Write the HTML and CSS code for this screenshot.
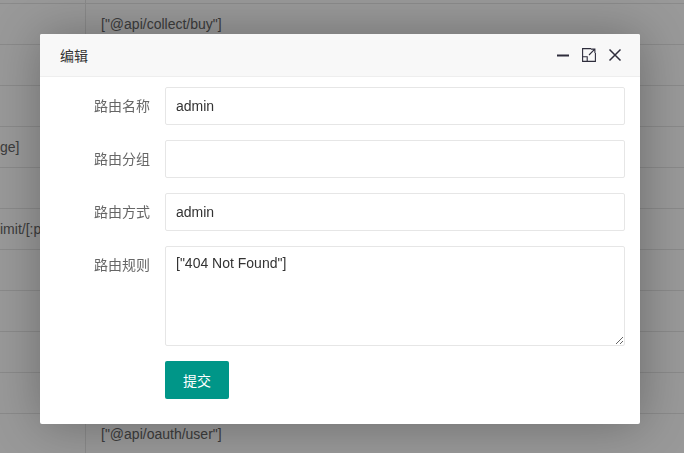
FILE: index.html
```html
<!DOCTYPE html>
<html lang="zh-CN">
<head>
  <meta charset="UTF-8">
  <meta name="viewport" content="width=device-width, initial-scale=1.0">
  <title>路由管理</title>
  <link rel="stylesheet" href="styles.css">
</head>
<body>
  <table class="list">
    <tr><td class="c1"></td><td></td></tr>
    <tr><td class="c1"></td><td>["@api/collect/buy"]</td></tr>
    <tr><td class="c1"></td><td></td></tr>
    <tr><td class="c1"></td><td></td></tr>
    <tr><td class="c1"><div class="clip">ge]</div></td><td></td></tr>
    <tr><td class="c1"></td><td></td></tr>
    <tr><td class="c1"><div class="clip">imit/[:page]</div></td><td></td></tr>
    <tr><td class="c1"></td><td></td></tr>
    <tr><td class="c1"></td><td></td></tr>
    <tr><td class="c1"></td><td></td></tr>
    <tr><td class="c1"></td><td></td></tr>
    <tr><td class="c1"></td><td>["@api/oauth/user"]</td></tr>
  </table>

  <div class="shade"></div>

  <div class="layer">
    <div class="layer-title">
      <span>编辑</span>
      <div class="layer-btns">
        <svg width="14" height="14" viewBox="0 0 14 14"><path d="M1 7.5h12" stroke="#2e2d3c" stroke-width="2"/></svg>
        <svg width="14" height="14" viewBox="0 0 14 14" fill="none" stroke="#2e2d3c" stroke-width="1.1">
          <path d="M9 0.6H0.6V13.4H13.4V5"/>
          <path d="M0.6 8.8H5.2V13.4"/>
          <path d="M7 7L12.8 1.2M9 1.1H12.9V5"/>
        </svg>
        <svg width="14" height="14" viewBox="0 0 14 14"><path d="M1.5 1.5L12.5 12.5M12.5 1.5L1.5 12.5" stroke="#2e2d3c" stroke-width="1.5"/></svg>
      </div>
    </div>
    <form class="layer-content">
      <div class="form-item">
        <label class="form-label">路由名称</label>
        <div class="input-block"><input class="input" type="text" value="admin"></div>
      </div>
      <div class="form-item">
        <label class="form-label">路由分组</label>
        <div class="input-block"><input class="input" type="text" value=""></div>
      </div>
      <div class="form-item">
        <label class="form-label">路由方式</label>
        <div class="input-block"><input class="input" type="text" value="admin"></div>
      </div>
      <div class="form-item">
        <label class="form-label">路由规则</label>
        <div class="input-block"><textarea class="textarea">["404 Not Found"]</textarea></div>
      </div>
      <div class="form-item">
        <div class="input-block"><button type="button" class="btn">提交</button></div>
      </div>
    </form>
  </div>
</body>
</html>
```

FILE: styles.css
```css
body {
  margin: 0;
  font-family: "Liberation Sans", Arial, "Noto Sans CJK SC", sans-serif;
  font-size: 14px;
  color: #666;
  background: #fff;
  overflow: hidden;
}
.list {
  border-collapse: collapse;
  width: 100%;
  margin-top: -37px;
}
.list td {
  height: 40px;
  padding: 0 15px;
  border-bottom: 1px solid #e6e6e6;
  white-space: nowrap;
}
.list td.c1 {
  width: 85px;
  padding: 0;
  border-right: 1px solid #e6e6e6;
}
.clip {
  width: 84px;
  overflow: hidden;
}
.shade {
  position: fixed;
  left: 0;
  top: 0;
  right: 0;
  bottom: 0;
  background: rgba(0, 0, 0, 0.4);
}
.layer {
  position: absolute;
  left: 40px;
  top: 34px;
  width: 600px;
  background: #fff;
  border-radius: 2px;
  box-shadow: 1px 1px 50px rgba(0, 0, 0, 0.3);
}
.layer-title {
  height: 42px;
  padding: 0 18px 0 20px;
  border-bottom: 1px solid #eee;
  background: #f8f8f8;
  border-radius: 2px 2px 0 0;
  color: #333;
  display: flex;
  align-items: center;
  justify-content: space-between;
}
.layer-btns {
  display: flex;
  gap: 12px;
  align-items: center;
}
.layer-btns svg {
  display: block;
}
.layer-content {
  padding: 10px 15px 10px 15px;
}
.form-item {
  display: flex;
  margin-bottom: 15px;
}
.form-label {
  width: 80px;
  padding: 9px 15px;
  line-height: 20px;
  text-align: right;
  color: #666;
  flex-shrink: 0;
}
.input-block {
  flex: 1;
  margin-left: 110px;
}
.form-label + .input-block {
  margin-left: 0;
}
.input,
.textarea {
  display: block;
  width: 100%;
  box-sizing: border-box;
  border: 1px solid #e6e6e6;
  border-radius: 2px;
  background: #fff;
  color: #333;
  font-family: inherit;
  font-size: 14px;
  outline: none;
}
.input {
  height: 38px;
  padding: 0 10px;
}
.textarea {
  height: 100px;
  padding: 6px 10px;
  line-height: 20px;
  resize: vertical;
}
.btn {
  height: 38px;
  padding: 0 18px;
  border: none;
  border-radius: 2px;
  background: #009688;
  color: #fff;
  font-family: inherit;
  font-size: 14px;
}
```
